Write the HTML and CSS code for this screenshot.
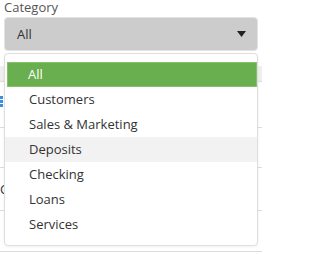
FILE: index.html
```html
<!DOCTYPE html>
<html>
<head>
<meta charset="utf-8">
<link rel="stylesheet" href="styles.css">
</head>
<body>
<div class="page">
  <div class="field">
    <div class="label">Category</div>
    <div class="select">
      <span class="value">All</span>
      <svg class="caret" width="9" height="6" viewBox="0 0 9 6"><path d="M0 0H9L4.5 6Z" fill="#222"/></svg>
    </div>
  </div>
  <div class="table">
    <div class="thead"></div>
    <div class="row r1"><span class="dots"></span></div>
    <div class="row r2"></div>
    <div class="row r3"><span class="ctext">C</span></div>
    <div class="row r4"></div>
  </div>
  <ul class="menu">
    <li class="item active">All</li>
    <li class="item">Customers</li>
    <li class="item">Sales &amp; Marketing</li>
    <li class="item hover">Deposits</li>
    <li class="item">Checking</li>
    <li class="item">Loans</li>
    <li class="item">Services</li>
  </ul>
</div>
</body>
</html>
```
FILE: styles.css
```css
html, body {
  margin: 0;
  padding: 0;
  background: #fff;
}
.page {
  position: relative;
  width: 262px;
  height: 254px;
  overflow: hidden;
  font-family: "Open Sans", "Noto Sans", sans-serif;
  font-size: 13px;
  color: #333;
}
.field {
  padding: 0 4px;
}
.label {
  height: 17px;
  line-height: 17px;
  margin-top: -1px;
  margin-bottom: 1px;
  color: #555;
  font-size: 13px;
}
.select {
  height: 32px;
  border: 1px solid #e2e2e2;
  border-radius: 4px;
  background: #cccccc;
  display: flex;
  align-items: center;
  justify-content: space-between;
  padding: 0 11px 0 12px;
  color: #333;
  font-size: 13px;
}
.caret {
  display: block;
}
.table {
  margin-top: 15px;
}
.thead {
  height: 15px;
  background: #efefef;
  border-bottom: 1px solid #dcdcdc;
}
.row {
  position: relative;
  border-bottom: 1px solid #dcdcdc;
}
.r1 { height: 45px; }
.r2 { height: 39px; }
.r3 { height: 42px; }
.r4 { height: 40px; }
.dots {
  position: absolute;
  left: 0;
  top: 14px;
  width: 3px;
  height: 12px;
  background: repeating-linear-gradient(#3d8ee0 0 3px, transparent 3px 4px);
}
.ctext {
  position: absolute;
  left: 0;
  top: 12px;
  color: #333;
}
.menu {
  position: absolute;
  left: 4px;
  top: 53px;
  width: 252px;
  margin: 0;
  padding: 8px 0;
  list-style: none;
  background: #fff;
  border: 1px solid #dedede;
  border-radius: 4px;
  box-shadow: 0 1px 3px rgba(0,0,0,0.06);
}
.item {
  height: 25px;
  line-height: 25px;
  padding-left: 24px;
  color: #333;
}
.item.active {
  margin-left: 2px;
  padding-left: 21px;
  background: #6aaf4f;
  color: #fff;
  box-shadow: inset 0 0 0 1px #86c06c;
}
.item.hover {
  background: #f2f2f2;
}
```
